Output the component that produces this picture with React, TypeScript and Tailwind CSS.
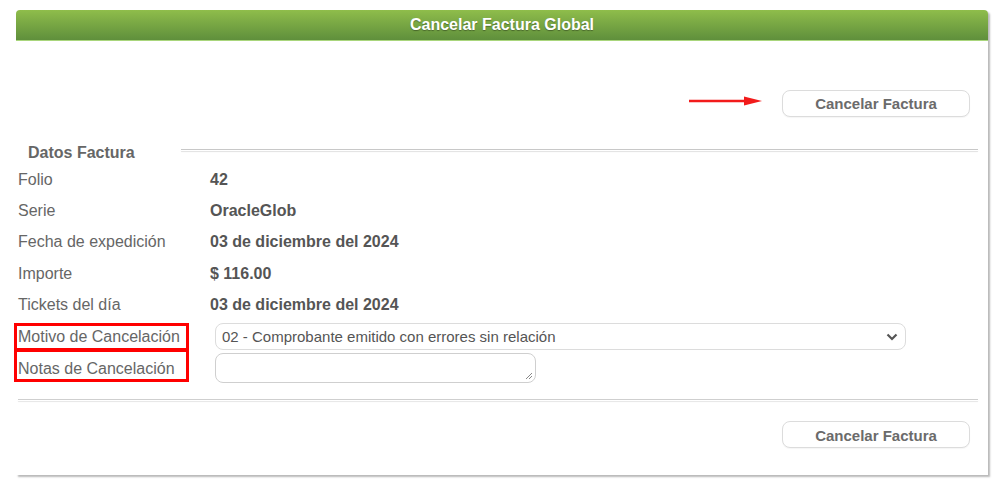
import React from 'react';

const rows = [
  { label: 'Folio', value: '42' },
  { label: 'Serie', value: 'OracleGlob' },
  { label: 'Fecha de expedición', value: '03 de diciembre del 2024' },
  { label: 'Importe', value: '$ 116.00' },
  { label: 'Tickets del día', value: '03 de diciembre del 2024' },
];

const CancelButton = () => (
  <button className="w-[188px] h-[27px] pt-[2px] rounded-[8px] border border-[#dcdcdc] bg-white text-[15px] font-bold text-[#6b6b6b] shadow-[0_1px_1px_rgba(0,0,0,0.04)]">
    Cancelar Factura
  </button>
);

export default function App() {
  return (
    <div className="min-h-[489px] bg-white pt-[10px] pl-[16px] font-['Liberation_Sans',Arial,sans-serif]">
      <div className="w-[972px] bg-white shadow-[2px_2px_2px_rgba(0,0,0,0.28)] rounded-t-[4px]">
        {/* encabezado */}
        <div className="h-[31px] rounded-t-[4px] bg-gradient-to-b from-[#8fbd4b] to-[#5f8f3c] border-b border-[#a9d67c] flex items-center justify-center">
          <span className="text-white font-bold text-[16px] [text-shadow:0_1px_1px_rgba(0,0,0,0.35)]">
            Cancelar Factura Global
          </span>
        </div>

        <div className="pr-[18px]">
          {/* botón superior */}
          <div className="pt-[49px] flex items-center justify-end gap-[20px]">
            <svg width="73" height="10" viewBox="0 0 73 10" className="-mt-[6px]">
              <line x1="0" y1="5" x2="58" y2="5" stroke="#f21b1b" strokeWidth="2.5" strokeLinecap="round" />
              <polygon points="55,0.5 73,5 55,9.5" fill="#f21b1b" />
            </svg>
            <CancelButton />
          </div>

          {/* datos factura */}
          <div className="mt-[25px] h-[22px] flex items-center">
            <span className="pl-[12px] w-[165px] shrink-0 text-[16px] font-bold text-[#666]">Datos Factura</span>
            <div className="flex-1 -mt-[6px] mr-[-8px] h-[2px] border-t border-[#c8c8c8] shadow-[0_1px_1px_rgba(0,0,0,0.12)]" />
          </div>

          <div className="pl-[2px]">
            {rows.map((r) => (
              <div key={r.label} className="h-[31.3px] flex items-center text-[16px]">
                <span className="w-[192px] shrink-0 text-[#666]">{r.label}</span>
                <span className="font-bold text-[#555]">{r.value}</span>
              </div>
            ))}

            <div className="relative">
              <div className="h-[33px] flex items-center text-[16px]">
                <span className="w-[197px] shrink-0 text-[#666]">Motivo de Cancelación</span>
                <div className="w-[691px] h-[27px] rounded-[8px] border border-[#dcdcdc] bg-white flex items-center justify-between pl-[6px] pr-[7px]">
                  <span className="text-[15px] text-[#555]">02 - Comprobante emitido con errores sin relación</span>
                  <svg width="12" height="8" viewBox="0 0 12 8">
                    <path d="M1.5 1.5 L6 6 L10.5 1.5" fill="none" stroke="#555" strokeWidth="2.2" />
                  </svg>
                </div>
              </div>
              <div className="h-[34px] flex items-start text-[16px]">
                <span className="w-[197px] shrink-0 text-[#666] pt-[4px]">Notas de Cancelación</span>
                <div className="relative w-[321px] h-[30px] rounded-[8px] border border-[#cfcfcf] bg-white">
                  <svg className="absolute right-[2px] bottom-[2px]" width="8" height="8" viewBox="0 0 8 8">
                    <path d="M7 1 L1 7 M7 4 L4 7" stroke="#888" strokeWidth="1" />
                  </svg>
                </div>
              </div>
              {/* marcas rojas */}
              <div className="absolute left-[-4px] top-[3px] w-[175px] h-[28px] border-[3px] border-[#f00]" />
              <div className="absolute left-[-4px] top-[29px] w-[175px] h-[33px] border-[3px] border-[#f00]" />
            </div>
          </div>

          <div className="mt-[12px] ml-[2px] mr-[-8px] h-[2px] border-t border-[#cfcfcf] shadow-[0_1px_1px_rgba(0,0,0,0.1)]" />

          <div className="pt-[20px] pb-[27px] flex justify-end">
            <CancelButton />
          </div>
        </div>
      </div>
    </div>
  );
}
